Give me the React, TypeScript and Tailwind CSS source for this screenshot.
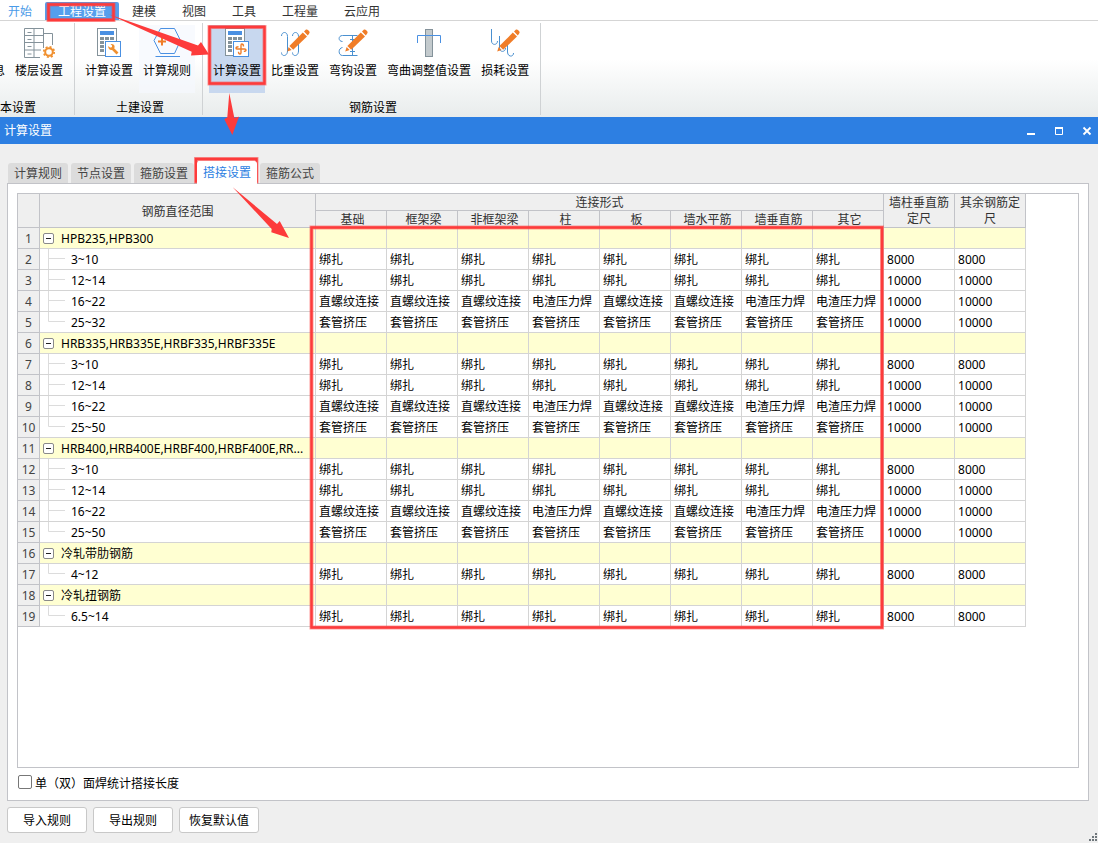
import { useState, type ReactNode } from "react";

const MENUS = ["建模", "视图", "工具", "工程量", "云应用"];
const TABS = ["计算规则", "节点设置", "箍筋设置", "搭接设置", "箍筋公式"];
const JOINT_COLUMNS = ["基础", "框架梁", "非框架梁", "柱", "板", "墙水平筋", "墙垂直筋", "其它"];

const TIED = Array<string>(8).fill("绑扎");
const SLEEVE = Array<string>(8).fill("套管挤压");
const THREADED = [
  "直螺纹连接",
  "直螺纹连接",
  "直螺纹连接",
  "电渣压力焊",
  "直螺纹连接",
  "直螺纹连接",
  "电渣压力焊",
  "电渣压力焊",
];

type Row = { range: string; joints: string[]; length: string };
type Group = { name: string; rows: Row[] };

const threadedGroup = (name: string, last: string): Group => ({
  name,
  rows: [
    { range: "3~10", joints: TIED, length: "8000" },
    { range: "12~14", joints: TIED, length: "10000" },
    { range: "16~22", joints: THREADED, length: "10000" },
    { range: last, joints: SLEEVE, length: "10000" },
  ],
});

const GROUPS: Group[] = [
  threadedGroup("HPB235,HPB300", "25~32"),
  threadedGroup("HRB335,HRB335E,HRBF335,HRBF335E", "25~50"),
  threadedGroup("HRB400,HRB400E,HRBF400,HRBF400E,RR...", "25~50"),
  { name: "冷轧带肋钢筋", rows: [{ range: "4~12", joints: TIED, length: "8000" }] },
  { name: "冷轧扭钢筋", rows: [{ range: "6.5~14", joints: TIED, length: "8000" }] },
];

function Icon({ children }: { children?: ReactNode }) {
  return (
    <svg viewBox="0 0 32 32" className="h-8 w-8 shrink-0" fill="none" aria-hidden="true">
      {children}
    </svg>
  );
}

function Pencil() {
  return (
    <g fill="#f07d28">
      <path d="M8.2 24.4L9.6 20L12.6 22.9Z" />
      <path d="M10.4 19L23.8 5.6L28 9.6L14.2 22.8Z" />
      <path d="M25 4.6L27 2.6Q28 2 29 3L30.4 4.4Q31 5.4 30.2 6.4L28.8 8.4Z" />
    </g>
  );
}

function FloorIcon() {
  return (
    <Icon>
      <path
        d="M1.5 1.5H20.5V21M1.5 1.5V30.5H17M11 1.5V30.5M1.5 8.5H20.5M1.5 15.5H20.5M1.5 23H18M20.5 6.5H29.5V18"
        stroke="#84929a"
      />
      <path d="M4.5 5.5H8.5M4.5 12.5H8.5M4.5 19.5H8.5M4.5 27H8.5" stroke="#84929a" />
      <circle cx="26" cy="25" r="3.8" stroke="#f09030" strokeWidth="2" />
      <circle cx="26" cy="25" r="5.2" stroke="#f09030" strokeWidth="1.8" strokeDasharray="2 2.08" />
    </Icon>
  );
}

function CalculatorIcon({ children }: { children: ReactNode }) {
  return (
    <Icon>
      <rect x="4.5" y="1.5" width="19" height="27" fill="#fff" stroke="#84929a" />
      <rect x="7" y="4" width="14" height="4" fill="#4a90e2" />
      {[10, 14, 18, 22].map((y) => (
        <path key={y} d={`M7 ${y + 1.5}H11M12 ${y + 1.5}H16M17 ${y + 1.5}H21`} stroke="#84929a" strokeWidth="3" />
      ))}
      <rect x="12.5" y="14.5" width="15" height="15" fill="#fff" stroke="#4a90e2" />
      {children}
    </Icon>
  );
}

function CivilCalcIcon() {
  return (
    <CalculatorIcon>
      <path d="M18.5 20.5L24.5 26.5" stroke="#f09030" strokeWidth="2.6" />
      <path d="M17.5 17L19 18.5V20.5H17L15.3 19Q15 21 16.2 22.2Q17.6 23.4 19.5 22.8L21.5 20.8Q22 19 20.8 17.8Q19.5 16.6 17.5 17Z" fill="#f09030" />
    </CalculatorIcon>
  );
}

function RebarCalcIcon() {
  return (
    <CalculatorIcon>
      <path
        d="M22.5 19.5Q22.5 17 20.8 17Q20 17 20 18.5V25.5Q20 27 19 27Q17.5 27 17.5 24.8M17.5 19.8Q15 19.8 15 21.2Q15 22 16.5 22H23.5Q25 22 25 23Q25 24.4 22.8 24.4"
        stroke="#f07d28"
        strokeWidth="1.4"
      />
    </CalculatorIcon>
  );
}

function RuleIcon() {
  return (
    <Icon>
      <path d="M9.5 1.5H23.5L29.5 13.5L23.5 26.5H9.5L3 13.5Z" stroke="#4a90e2" />
      <path d="M4.5 29.5H29" stroke="#4a90e2" />
      <path d="M7 14.5H15M11 10.5V18.5" stroke="#f07d28" strokeWidth="2" />
    </Icon>
  );
}

function WeightIcon() {
  return (
    <Icon>
      <path
        d="M2.5 9C2.5 4.5 8.5 4 8.5 9.5V24C8.5 29.5 2.5 30 2.5 25.5M13.5 9C13.5 4.5 19.5 4 19.5 9.5V24C19.5 29.5 13.5 30 13.5 25.5"
        stroke="#4a90d0"
      />
      <Pencil />
    </Icon>
  );
}

function HookIcon() {
  return (
    <Icon>
      <path
        d="M20.5 8.5H5.5C1 8.5 1 14.5 5.5 14.5M5.5 20.5C1 21 1 28.5 5.5 28.5H20.5M15.5 9V28M13 12.5H18M13 24.5H18"
        stroke="#4a90d0"
      />
      <Pencil />
    </Icon>
  );
}

function BendIcon() {
  return (
    <Icon>
      <rect x="12.5" y="2.5" width="7" height="27" fill="#c3cacd" stroke="#84929a" />
      <path d="M4.5 16V8.5H27.5V16" stroke="#4a90e2" />
    </Icon>
  );
}

function LossIcon() {
  return (
    <Icon>
      <path
        d="M2.5 2V14C2.5 18.5 8.5 18.5 8.5 14M10.5 9V21C10.5 25.5 16.5 25.5 16.5 21M18.5 17V25C18.5 30 24.5 30.5 24.5 26"
        stroke="#4a90d0"
      />
      <Pencil />
    </Icon>
  );
}

function RibbonGroup({ title, className = "", children }: { title: string; className?: string; children: ReactNode }) {
  return (
    <section className={`my-[2px] flex shrink-0 flex-col border-r border-[#cfd2d4] pt-[2px] ${className}`}>
      <div className="flex gap-[2px] pr-[7px] pl-[6px]">{children}</div>
      <h2 className="mt-auto pl-[3px] text-center leading-[14px]">{title}</h2>
    </section>
  );
}

function RibbonButton({ label, icon, className = "" }: { label: string; icon: ReactNode; className?: string }) {
  return (
    <button
      type="button"
      className={`flex h-[68px] shrink-0 flex-col items-center px-1 pt-[2px] whitespace-nowrap ${className}`}
    >
      {icon}
      <span className="mt-1 leading-4">{label}</span>
    </button>
  );
}

function TreeLine({ last }: { last: boolean }) {
  return (
    <svg viewBox="0 0 31 20" className="h-5 w-[31px] shrink-0" fill="none" stroke="#dcdcdc" aria-hidden="true">
      <path d={last ? "M8.5 0V9.5H25" : "M8.5 0V20M8.5 9.5H25"} />
    </svg>
  );
}

function JointTable() {
  const [collapsed, setCollapsed] = useState<string[]>([]);

  function toggle(name: string) {
    setCollapsed((prev) => (prev.includes(name) ? prev.filter((n) => n !== name) : [...prev, name]));
  }

  const head = "border-r border-b border-[#c2c3c8] bg-[#efefef] px-0 pb-0 font-normal text-[#333]";
  const num = "border-r border-b border-[#c2c3c8] bg-[#efefef] px-0 pt-[2px] pb-0 font-normal text-[#444]";
  const cell = "border-r border-b border-[#d4d4d4] pt-[2px] pr-0 pb-0 pl-[3px] whitespace-nowrap";

  let line = 0;

  return (
    <table className="w-[1008px] table-fixed border-separate border-spacing-0 leading-[18px]">
      <colgroup>
        <col className="w-[22px]" />
        <col className="w-[276px]" />
        {JOINT_COLUMNS.map((c) => (
          <col key={c} className="w-[71px]" />
        ))}
        <col className="w-[71px]" />
        <col className="w-[71px]" />
      </colgroup>
      <thead>
        <tr className="h-[17px]">
          <th rowSpan={2} className={head} />
          <th rowSpan={2} className={`${head} pt-[2px] leading-4`}>钢筋直径范围</th>
          <th colSpan={8} className={`${head} pt-[2px] leading-[14px]`}>连接形式</th>
          <th rowSpan={2} className={`${head} pt-px leading-4`}>墙柱垂直筋定尺</th>
          <th rowSpan={2} className={`${head} pt-px leading-4`}>其余钢筋定尺</th>
        </tr>
        <tr className="h-[17px]">
          {JOINT_COLUMNS.map((c) => (
            <th key={c} className={`${head} pt-[2px] leading-[14px]`}>
              <span className="pl-[3px]">{c}</span>
            </th>
          ))}
        </tr>
      </thead>
      {GROUPS.map((group) => {
        const open = !collapsed.includes(group.name);
        const groupLine = ++line;
        const firstChild = line + 1;
        line += group.rows.length;
        return (
          <tbody key={group.name}>
            <tr className="h-[21px] bg-[#ffffd2]">
              <th className={num}>{groupLine}</th>
              <td className="border-r border-b border-[#d4d4d4] p-0">
                <div className="flex h-5 items-center pl-[3px]">
                  <button
                    type="button"
                    onClick={() => toggle(group.name)}
                    aria-label={open ? "折叠" : "展开"}
                    className="flex h-[11px] w-[11px] shrink-0 items-center justify-center rounded-[2px] border border-[#8a8a8a] bg-white"
                  >
                    <svg viewBox="0 0 7 7" className="h-[7px] w-[7px]" stroke="#222" aria-hidden="true">
                      <path d={open ? "M1 3.5H6" : "M1 3.5H6M3.5 1V6"} />
                    </svg>
                  </button>
                  <span className="ml-[7px] pt-[2px] whitespace-nowrap">{group.name}</span>
                </div>
              </td>
              {Array.from({ length: 10 }, (_, i) => (
                <td key={i} className={cell} />
              ))}
            </tr>
            {open &&
              group.rows.map((row, i) => (
                <tr key={row.range} className="h-[21px] bg-white">
                  <th className={num}>{firstChild + i}</th>
                  <td className="border-r border-b border-[#d4d4d4] p-0">
                    <div className="flex h-5 items-center">
                      <TreeLine last={i === group.rows.length - 1} />
                      <span className="pt-[2px]">{row.range}</span>
                    </div>
                  </td>
                  {row.joints.map((joint, j) => (
                    <td key={j} className={cell}>{joint}</td>
                  ))}
                  <td className={cell}>{row.length}</td>
                  <td className={cell}>{row.length}</td>
                </tr>
              ))}
          </tbody>
        );
      })}
    </table>
  );
}

// Red tutorial marks drawn over the window
function Annotations() {
  return (
    <svg
      viewBox="0 0 1098 843"
      className="pointer-events-none absolute top-0 left-0 h-[843px] w-[1098px]"
      fill="none"
      aria-hidden="true"
    >
      {[
        "M48.5 4.5H113.5V20H48.5Z",
        "M209.5 27H264.5V83.5H209.5Z",
        "M196 159H256.5V181.5H196Z",
        "M311.5 227.5H882V627.5H311.5Z",
      ].map((d) => (
        <g key={d} stroke="#fd3b3b">
          <path d={d} strokeWidth="4" opacity="0.5" />
          <path d={d} strokeWidth="2.4" />
        </g>
      ))}
      <g fill="#fd3b3b">
        <path d="M108 14L198 45.5L201 42L209 54.5L191 55.5L191.7 51.7Z" />
        <path d="M229.3 93L227.3 117.3L224.3 119.3L232.3 135L239 116.7L234.3 117.7Z" />
        <path d="M232.7 187.3L271.7 229L271.3 232.3L289 238L279.7 221L277 224Z" />
      </g>
    </svg>
  );
}

export default function App() {
  const [tab, setTab] = useState("搭接设置");
  const [weld, setWeld] = useState(false);

  return (
    <div
      lang="zh-CN"
      className="relative flex min-h-screen flex-col overflow-hidden bg-[#efefef] font-['Noto_Sans','Noto_Sans_CJK_SC',sans-serif] text-[12px] text-black"
    >
      <nav className="flex h-[21px] items-end border-b border-[#d5d5d5] bg-white pl-2 text-[#333]">
        <button type="button" className="h-[18px] pt-[2px] leading-4 text-[#4a9be8]">开始</button>
        <button type="button" className="mr-[13px] ml-[13px] h-[18px] w-[74px] rounded-t-[2px] bg-[#559fed] pt-[2px] leading-4 text-white">
          工程设置
        </button>
        <div className="flex gap-[26px]">
          {MENUS.map((m) => (
            <button key={m} type="button" className="h-[18px] pt-[2px] leading-4">{m}</button>
          ))}
        </div>
      </nav>

      <div className="flex h-24 bg-linear-to-b from-white from-40% to-[#e8ecec]">
        <RibbonGroup title="基本设置" className="-ml-[53px]">
          <RibbonButton label="工程信息" icon={<Icon />} />
          <RibbonButton label="楼层设置" icon={<FloorIcon />} />
        </RibbonGroup>
        <RibbonGroup title="土建设置">
          <RibbonButton label="计算设置" icon={<CivilCalcIcon />} />
          <RibbonButton label="计算规则" icon={<RuleIcon />} className="bg-[#f5f8fd]/70" />
        </RibbonGroup>
        <RibbonGroup title="钢筋设置">
          <RibbonButton label="计算设置" icon={<RebarCalcIcon />} className="bg-[#c8d8ef]" />
          <RibbonButton label="比重设置" icon={<WeightIcon />} />
          <RibbonButton label="弯钩设置" icon={<HookIcon />} />
          <RibbonButton label="弯曲调整值设置" icon={<BendIcon />} />
          <RibbonButton label="损耗设置" icon={<LossIcon />} />
        </RibbonGroup>
      </div>

      <header className="flex h-[27px] items-center bg-[#2d7fe2] pr-[5px] pl-1 text-white">
        <h1 className="mr-auto">计算设置</h1>
        <div className="flex gap-4">
          <button type="button" aria-label="最小化">
            <svg viewBox="0 0 12 12" className="h-3 w-3"><path d="M2 9H10" stroke="#fff" strokeWidth="2" /></svg>
          </button>
          <button type="button" aria-label="最大化">
            <svg viewBox="0 0 12 12" className="h-3 w-3" fill="none" stroke="#fff">
              <path d="M2.5 3V9.5H9.5V3" />
              <path d="M2 3H10" strokeWidth="2" />
            </svg>
          </button>
          <button type="button" aria-label="关闭">
            <svg viewBox="0 0 12 12" className="h-3 w-3"><path d="M2.5 2.5L9.5 9.5M9.5 2.5L2.5 9.5" stroke="#fff" strokeWidth="1.8" /></svg>
          </button>
        </div>
      </header>

      <main className="flex grow flex-col pt-[17px] pr-[9px] pb-[10px] pl-[7px]">
        <div role="tablist" className="flex items-end gap-[3px] pl-[1px]">
          {TABS.map((t) => (
            <button
              key={t}
              type="button"
              role="tab"
              aria-selected={t === tab}
              onClick={() => setTab(t)}
              className={
                t === tab
                  ? "z-10 -mb-px h-[23px] w-[60px] rounded-t-[3px] bg-white pt-px text-[#2d7fe2]"
                  : "h-5 w-[60px] rounded-t-[3px] bg-[#dcdcdc] pt-[2px] text-[#444]"
              }
            >
              {t}
            </button>
          ))}
        </div>

        <div className="flex grow flex-col border border-[#c2c3c8] bg-white px-[9px] pt-[9px] pb-[10px]">
          <div className="grow overflow-hidden border border-[#c2c3c8]">
            <JointTable />
          </div>
          <label className="mt-[6px] flex h-4 items-center gap-[3px] pl-[1px]">
            <input
              type="checkbox"
              checked={weld}
              onChange={(e) => setWeld(e.target.checked)}
              className="h-[14px] w-[14px] appearance-none rounded-[2px] border border-[#777] bg-white checked:bg-[#2d7fe2]"
            />
            <span className="pt-[2px] font-['Noto_Sans_CJK_TC',sans-serif] leading-4">
              单（双）<span className="font-['Noto_Sans_CJK_SC',sans-serif]">面焊统计搭接长度</span>
            </span>
          </label>
        </div>

        <div className="mt-[6px] flex gap-[6px]">
          {["导入规则", "导出规则", "恢复默认值"].map((label) => (
            <button key={label} type="button" className="h-[26px] w-20 rounded-[3px] border border-[#c8c8c8] bg-white pt-[2px]">
              {label}
            </button>
          ))}
        </div>
      </main>

      <svg viewBox="0 0 9 9" className="absolute right-0 bottom-px h-[9px] w-[9px]" fill="#6f777c" aria-hidden="true">
        <path d="M6 0h2v2h-2zM3 3h2v2h-2zM6 3h2v2h-2zM0 6h2v2h-2zM3 6h2v2h-2zM6 6h2v2h-2z" />
      </svg>

      <Annotations />
    </div>
  );
}
